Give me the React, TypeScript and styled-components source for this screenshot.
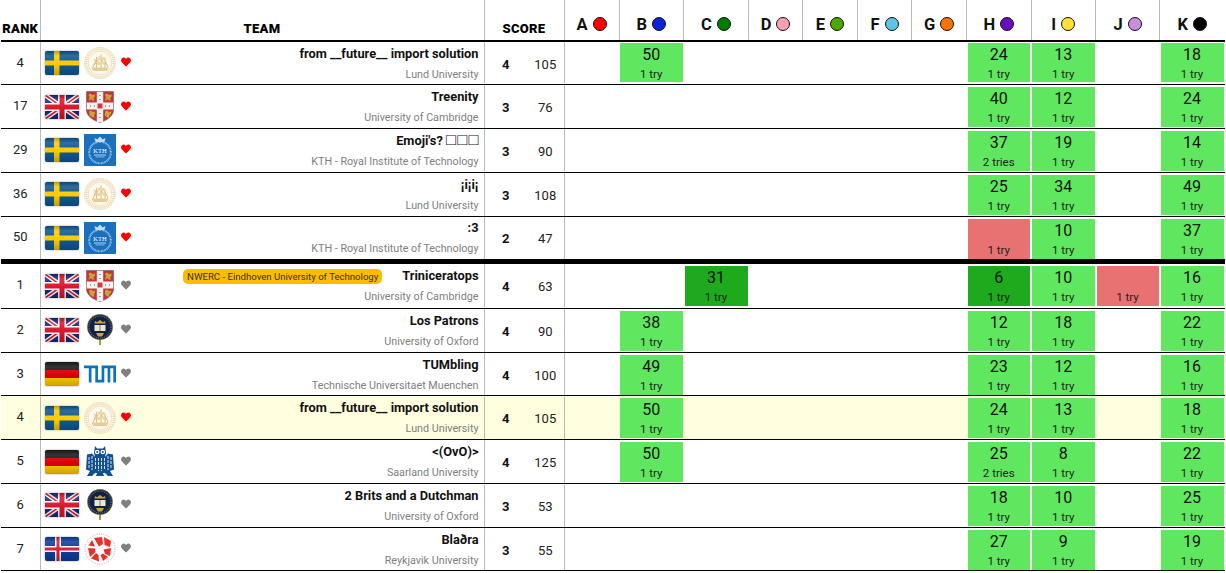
import * as React from 'react'
import styled, { createGlobalStyle } from 'styled-components'
import { FaHeart } from 'react-icons/fa'

const GREEN = '#60e760'
const FIRST = '#1daa1d'
const FAIL = '#e87272'

const problems = [
  { letter: 'A', color: '#ff0000', width: 55 },
  { letter: 'B', color: '#0a22d8', width: 64.5 },
  { letter: 'C', color: '#007c00', width: 65 },
  { letter: 'D', color: '#ff9fb4', width: 54 },
  { letter: 'E', color: '#4ea600', width: 55 },
  { letter: 'F', color: '#5fc4e8', width: 54 },
  { letter: 'G', color: '#ff7300', width: 55 },
  { letter: 'H', color: '#6a0dc0', width: 64.5 },
  { letter: 'I', color: '#ffe03a', width: 64.5 },
  { letter: 'J', color: '#c88ddc', width: 64 },
  { letter: 'K', color: '#000000', width: 65 },
]

type Country = 'se' | 'uk' | 'de' | 'is'
type School = 'lund' | 'cam' | 'kth' | 'ox' | 'tum' | 'saar' | 'ru'
type Solve = { time?: number; tries?: string; kind: 'ok' | 'first' | 'fail' }

interface TeamRow {
  rank: number
  country: Country
  school: School
  favorite: boolean
  name: string
  missingGlyphs?: string
  affiliation: string
  points: number
  time: number
  badge?: string
  solves: Record<string, Solve>
  highlight?: boolean
  separated?: boolean
}

const ok = (time: number, tries = '1 try'): Solve => ({ time, tries, kind: 'ok' })

const rows: TeamRow[] = [
  { rank: 4, country: 'se', school: 'lund', favorite: true, name: 'from __future__ import solution', affiliation: 'Lund University', points: 4, time: 105, solves: { B: ok(50), H: ok(24), I: ok(13), K: ok(18) } },
  { rank: 17, country: 'uk', school: 'cam', favorite: true, name: 'Treenity', affiliation: 'University of Cambridge', points: 3, time: 76, solves: { H: ok(40), I: ok(12), K: ok(24) } },
  { rank: 29, country: 'se', school: 'kth', favorite: true, name: "Emoji's? ", missingGlyphs: '□□□', affiliation: 'KTH - Royal Institute of Technology', points: 3, time: 90, solves: { H: ok(37, '2 tries'), I: ok(19), K: ok(14) } },
  { rank: 36, country: 'se', school: 'lund', favorite: true, name: '¡i¡i¡', affiliation: 'Lund University', points: 3, time: 108, solves: { H: ok(25), I: ok(34), K: ok(49) } },
  { rank: 50, country: 'se', school: 'kth', favorite: true, name: ':3', affiliation: 'KTH - Royal Institute of Technology', points: 2, time: 47, solves: { H: { tries: '1 try', kind: 'fail' }, I: ok(10), K: ok(37) } },
  { rank: 1, country: 'uk', school: 'cam', favorite: false, name: 'Triniceratops', affiliation: 'University of Cambridge', badge: 'NWERC - Eindhoven University of Technology', points: 4, time: 63, separated: true, solves: { C: { time: 31, tries: '1 try', kind: 'first' }, H: { time: 6, tries: '1 try', kind: 'first' }, I: ok(10), J: { tries: '1 try', kind: 'fail' }, K: ok(16) } },
  { rank: 2, country: 'uk', school: 'ox', favorite: false, name: 'Los Patrons', affiliation: 'University of Oxford', points: 4, time: 90, solves: { B: ok(38), H: ok(12), I: ok(18), K: ok(22) } },
  { rank: 3, country: 'de', school: 'tum', favorite: false, name: 'TUMbling', affiliation: 'Technische Universitaet Muenchen', points: 4, time: 100, solves: { B: ok(49), H: ok(23), I: ok(12), K: ok(16) } },
  { rank: 4, country: 'se', school: 'lund', favorite: true, highlight: true, name: 'from __future__ import solution', affiliation: 'Lund University', points: 4, time: 105, solves: { B: ok(50), H: ok(24), I: ok(13), K: ok(18) } },
  { rank: 5, country: 'de', school: 'saar', favorite: false, name: '<(OvO)>', affiliation: 'Saarland University', points: 4, time: 125, solves: { B: ok(50), H: ok(25, '2 tries'), I: ok(8), K: ok(22) } },
  { rank: 6, country: 'uk', school: 'ox', favorite: false, name: '2 Brits and a Dutchman', affiliation: 'University of Oxford', points: 3, time: 53, solves: { H: ok(18), I: ok(10), K: ok(25) } },
  { rank: 7, country: 'is', school: 'ru', favorite: false, name: 'Blaðra', affiliation: 'Reykjavik University', points: 3, time: 55, solves: { H: ok(27), I: ok(9), K: ok(19) } },
]

function FlagArt({ country }: { country: Country }) {
  if (country === 'se')
    return (
      <svg viewBox="0 0 34 24" width="34" height="24">
        <rect width="34" height="24" fill="#0f5a94" />
        <rect x="9" width="5.500" height="24" fill="#fecb00" />
        <rect y="9.500" width="34" height="5" fill="#fecb00" />
      </svg>
    )
  if (country === 'de')
    return (
      <svg viewBox="0 0 34 24" width="34" height="24">
        <rect width="34" height="8" fill="#1a1a1a" />
        <rect y="8" width="34" height="8" fill="#dd0000" />
        <rect y="16" width="34" height="8" fill="#ffce00" />
      </svg>
    )
  if (country === 'is')
    return (
      <svg viewBox="0 0 34 24" width="34" height="24">
        <rect width="34" height="24" fill="#0f3f9e" />
        <rect x="10" width="6" height="24" fill="#fff" />
        <rect y="9" width="34" height="6" fill="#fff" />
        <rect x="11.500" width="3" height="24" fill="#dc1e35" />
        <rect y="10.500" width="34" height="3" fill="#dc1e35" />
      </svg>
    )
  return (
    <svg viewBox="0 0 34 24" width="34" height="24">
      <rect width="34" height="24" fill="#1c2a78" />
      <path d="M0 0L34 24M34 0L0 24" stroke="#fff" strokeWidth="4.500" />
      <path d="M0 0L34 24M34 0L0 24" stroke="#d8182f" strokeWidth="1.500" />
      <rect x="13" width="8" height="24" fill="#fff" />
      <rect y="8" width="34" height="8" fill="#fff" />
      <rect x="14.500" width="5" height="24" fill="#d8182f" />
      <rect y="9.500" width="34" height="5" fill="#d8182f" />
    </svg>
  )
}

function SchoolArt({ school }: { school: School }) {
  switch (school) {
    case 'lund':
      return (
        <svg viewBox="0 0 32 32" width="32" height="32">
          <circle cx="16" cy="16" r="15.700" fill="#fdf9ef" stroke="#e6d2a3" strokeWidth=".6" />
          <circle cx="16" cy="16" r="13.800" fill="none" stroke="#e9d6ab" strokeWidth="2" strokeDasharray="1.100 1" />
          <circle cx="16" cy="16" r="11.800" fill="none" stroke="#e2c98e" strokeWidth=".5" />
          <path d="M7 20.500h18l-2.500 3.500h-13z" fill="#e6cd96" />
          <path d="M12.500 20.500V10M17 20.500V7.500M21 20.500V11M10 12l5 6M10 18l5-6M15 9.500l5 8M15 17.500l5-7M9 20l3-7M24 20l-3-6" stroke="#dfc283" strokeWidth="1.100" fill="none" />
          <path d="M13.500 10h7v3h-7zM13 14.500h8v2.500h-8z" fill="#ecd9ae" />
        </svg>
      )
    case 'cam':
      return (
        <svg viewBox="0 0 32 32" width="32" height="32">
          <path d="M2.500.5h27V19c0 6-6.500 10.500-13.500 12.500C9 29.500 2.500 25 2.500 19z" fill="#c4323f" stroke="#6a5a5a" strokeWidth=".6" />
          <path d="M12.800.8h6.400v30.400h-6.400zM2.800 11.500h26.400v7H2.800z" fill="#f4f2ee" />
          <rect x="13.500" y="12.500" width="5" height="5" fill="#cf3b45" />
          <path d="M4.500 3.500l2-1 2 1.500 2.500-.5v2l-1.500 2 1 2H8l-1-1.500-1.500 1.500h-1l1-3zM21 3.500l2-1 2 1.500 2.500-.5v2l-1.500 2 1 2h-2.500l-1-1.500-1.500 1.500h-1l1-3zM5 20.500l2-1 2 1.500 2-.5v2l-1 2 .5 2H8l-1-1.500-1 .5zM21 20.500l2-1 2 1.500 2.500-.5-.5 2-1.500 2-1 2.500-2.500-1.500-1-1z" fill="#c8a52e" />
          <path d="M15.500 4h1v1h-1zM15.500 8h1v1h-1zM15.500 22h1v1h-1zM15.500 26h1v1h-1zM6 14.500h1v1H6zM10 14.500h1v1h-1zM21 14.500h1v1h-1zM25 14.500h1v1h-1z" fill="#555" />
        </svg>
      )
    case 'kth':
      return (
        <svg viewBox="0 0 32 32" width="32" height="32">
          <rect width="32" height="32" fill="#1b70bd" />
          <circle cx="16" cy="18.500" r="10.800" fill="none" stroke="#9fc6e8" strokeWidth="2" strokeDasharray=".9 .6" />
          <path d="M11.500 8l-1-4 2.800 1.500L16 2.500l2.700 3L21.500 4l-1 4z" fill="#c4dbf0" />
          <text x="16" y="18.800" textAnchor="middle" fontSize="6.500" fill="#fff" fontFamily="Liberation Serif, serif">KTH</text>
          <rect x="10" y="20.500" width="12" height="1" fill="#b6d3ec" />
          <rect x="11.500" y="22.500" width="9" height=".8" fill="#9fc6e8" />
        </svg>
      )
    case 'ox':
      return (
        <svg viewBox="0 0 32 32" width="32" height="32">
          <path d="M16 24v7" stroke="#b8963a" strokeWidth="2" />
          <circle cx="16" cy="13" r="12.700" fill="#0f2247" stroke="#a08a4a" strokeWidth=".5" />
          <circle cx="16" cy="13" r="11" fill="none" stroke="#77704f" strokeWidth="1.200" strokeDasharray="1 1" />
          <rect x="10.500" y="11" width="11" height="6" fill="#ece6d4" />
          <rect x="15.500" y="11" width="1" height="6" fill="#8a7a50" />
          <path d="M10.500 9.500l.5-2.500 2 1.200L16 6l3 2.200 2-1.200.5 2.500z" fill="#c9a63c" />
          <path d="M12 19h8l-2 3.500h-4z" fill="#c9a63c" />
        </svg>
      )
    case 'tum':
      return (
        <svg viewBox="0 0 32 32" width="32" height="32">
          <path
            d="M0 7.500h14v17H11.300V10.200H7.500v14.300H4.800V10.200H0zM11.300 21.800h6.300V7.500H32v17h-2.700V10.200h-3v14.300h-2.700V10.200h-3.300v14.300h-9z"
            fill="#1072bd"
          />
        </svg>
      )
    case 'saar':
      return (
        <svg viewBox="0 0 32 32" width="32" height="32">
          <path d="M11 0l2 2.500h6L21 0l1 7-1 4 3-3.500 5 1 1 15-4 1.500 3 5h-5l-3-3h-2l1 3h-8l1-3h-2l-3 3H3l3-5-4-1.500 1-15 5-1 3 3.500-1-4z" fill="#14508e" />
          <circle cx="13.200" cy="6" r="2.300" fill="#fff" />
          <circle cx="18.800" cy="6" r="2.300" fill="#fff" />
          <circle cx="13.200" cy="6" r="1" fill="#14508e" />
          <circle cx="18.800" cy="6" r="1" fill="#14508e" />
          <path d="M5 11v12M8 10v14M11.500 12v12M14.500 12v13M17.500 12v13M20.500 12v12M24 10v14M27 11v12" stroke="#d4e3f0" strokeWidth="1" strokeDasharray="3 1" />
        </svg>
      )
    case 'ru':
      return (
        <svg viewBox="0 0 32 32" width="32" height="32">
          <circle cx="16" cy="16" r="15" fill="none" stroke="#c9a0a0" strokeWidth="1" strokeDasharray="1 1.300" />
          <path d="M10 5l8-1 1 7-4 2.500zM20 4l7 4-1 6-5.500-2zM27 15l-1 8-5-2-1.500-4.500zM24 24l-5 4-2.500-6 2.500-1.500zM15 28.500l-8-3 5-5.500 2.500 2zM6 24l-2-9 7 .5.500 3.500zM4.500 12.500L8 7l3 6.500z" fill="#ea2e28" />
        </svg>
      )
  }
}

export default function App() {
  return (
    <>
      <GlobalStyle />
      <Board>
        <colgroup>
          <col width={39} />
          <col width={444} />
          <col width={43} />
          <col width={37} />
          {problems.map((p) => (
            <col key={p.letter} style={{ width: p.width }} />
          ))}
        </colgroup>
        <thead>
          <tr>
            <LabelHead>RANK</LabelHead>
            <LabelHead>TEAM</LabelHead>
            <LabelHead colSpan={2}>SCORE</LabelHead>
            {problems.map((p) => (
              <ProblemHead key={p.letter}>
                <ProblemLabel>
                  {p.letter}
                  <Balloon $color={p.color} />
                </ProblemLabel>
              </ProblemHead>
            ))}
          </tr>
        </thead>
        <tbody>
          {rows.map((row, i) => (
            <Row key={i} $highlight={row.highlight} $separated={row.separated}>
              <RankCell>{row.rank}</RankCell>
              <TeamCell>
                <TeamLayout>
                  <FlagFrame>
                    <FlagArt country={row.country} />
                  </FlagFrame>
                  <SchoolLogo>
                    <SchoolArt school={row.school} />
                  </SchoolLogo>
                  <Favorite $on={row.favorite}>
                    <FaHeart size={10} />
                  </Favorite>
                  <TeamInfo>
                    <NameLine>
                      {row.badge && <GroupBadge>{row.badge}</GroupBadge>}
                      <TeamName>
                        {row.name}
                        {row.missingGlyphs && <MissingGlyphs>{row.missingGlyphs}</MissingGlyphs>}
                      </TeamName>
                    </NameLine>
                    <Affiliation>{row.affiliation}</Affiliation>
                  </TeamInfo>
                </TeamLayout>
              </TeamCell>
              <PointsCell>{row.points}</PointsCell>
              <TimeCell>{row.time}</TimeCell>
              {problems.map((p) => {
                const solve = row.solves[p.letter]
                return (
                  <ProblemCell key={p.letter}>
                    {solve && (
                      <ScoreBox $kind={solve.kind}>
                        <ScoreTime>{solve.time}</ScoreTime>
                        <ScoreTries>{solve.tries}</ScoreTries>
                      </ScoreBox>
                    )}
                  </ProblemCell>
                )
              })}
            </Row>
          ))}
        </tbody>
      </Board>
    </>
  )
}

const GlobalStyle = createGlobalStyle`
  body {
    margin: 0;
    background: #fff;
    color: #111;
    font-family: Roboto, "Liberation Sans", "DejaVu Sans", sans-serif;
  }
`

const Board = styled.table`
  margin-left: 1px;
  width: 1223px;
  table-layout: fixed;
  border-collapse: collapse;
  font-size: 13px;
`

const LabelHead = styled.th`
  box-sizing: border-box;
  height: 41px;
  padding: 0 0 3px;
  border-right: 1px solid #bbb;
  border-bottom: 2px solid #000;
  vertical-align: bottom;
  font-size: 13px;
  font-weight: 900;
  letter-spacing: 0.3px;
  line-height: 16px;
  color: #000;
`

const ProblemHead = styled.th`
  box-sizing: border-box;
  padding: 0 0 6px;
  border-right: 1px solid #bbb;
  border-bottom: 2px solid #000;
  vertical-align: bottom;
  &:last-child {
    border-right: none;
  }
`

const ProblemLabel = styled.span`
  display: inline-flex;
  align-items: center;
  gap: 5px;
  font-size: 16.5px;
  font-weight: 700;
  line-height: 18px;
  color: #111;
`

const Balloon = styled.span<{ $color: string }>`
  display: block;
  width: 12px;
  height: 12px;
  margin-top: -2px;
  border: 1px solid #111;
  border-radius: 50%;
  background: ${(p) => p.$color};
`

const Row = styled.tr<{ $highlight?: boolean; $separated?: boolean }>`
  background: ${(p) => (p.$highlight ? '#ffffe0' : 'transparent')};
  & > td {
    box-sizing: border-box;
    height: ${(p) => (p.$separated ? '47.4px' : '43.75px')};
    border-bottom: 1px solid #000;
    border-top: ${(p) => (p.$separated ? '5px solid #000' : 'none')};
  }
`

const RankCell = styled.td`
  padding: 0 0 2px;
  border-right: 1px solid #bbb;
  text-align: center;
  color: #222;
`

const TeamCell = styled.td`
  padding: 0 5px 0 4px;
  border-right: 1px solid #bbb;
`

const TeamLayout = styled.div`
  display: flex;
  align-items: center;
`

const FlagFrame = styled.div`
  position: relative;
  flex: none;
  width: 34px;
  height: 24px;
  margin-right: 5px;
  overflow: hidden;
  border-radius: 2px;
  box-shadow: 0 0 2px rgba(0, 0, 0, 0.45);
  svg {
    display: block;
  }
  &::after {
    content: '';
    position: absolute;
    inset: 0;
    background: linear-gradient(
      rgba(0, 0, 0, 0.22),
      rgba(255, 255, 255, 0.12) 20%,
      rgba(255, 255, 255, 0) 55%,
      rgba(0, 0, 0, 0.22)
    );
  }
`

const SchoolLogo = styled.div`
  flex: none;
  width: 32px;
  height: 32px;
  svg {
    display: block;
  }
`

const Favorite = styled.div<{ $on: boolean }>`
  flex: none;
  display: flex;
  width: 10px;
  margin: -2px 0 0 5px;
  color: ${(p) => (p.$on ? '#ff0000' : '#808080')};
`

const TeamInfo = styled.div`
  flex: 1;
  display: flex;
  flex-direction: column;
  align-items: flex-end;
  gap: 4px;
  margin-top: 1px;
`

const NameLine = styled.div`
  display: flex;
  align-items: center;
  justify-content: flex-end;
`

const TeamName = styled.span`
  font-size: 12.8px;
  font-weight: 700;
  line-height: 18px;
  white-space: pre;
  color: #111;
`

const MissingGlyphs = styled.span`
  margin-right: -1.3px;
  font-size: 16.5px;
  font-weight: 400;
  letter-spacing: 1.3px;
  line-height: 1;
`

const GroupBadge = styled.span`
  margin-right: 20px;
  padding: 0 4px;
  border-radius: 5px;
  background: #ffbb00;
  font-size: 9.6px;
  line-height: 15px;
  color: #333;
`

const Affiliation = styled.span`
  font-size: 10.75px;
  line-height: 16px;
  color: #808080;
`

const PointsCell = styled.td`
  padding: 2px 0 0;
  text-align: center;
  font-weight: 700;
`

const TimeCell = styled.td`
  padding: 2px 0 0;
  border-right: 1px solid #bbb;
  text-align: center;
  color: #222;
`

const ProblemCell = styled.td`
  padding: 0 1px;
  vertical-align: top;
`

const kindColors = { ok: GREEN, first: FIRST, fail: FAIL }

const ScoreBox = styled.div<{ $kind: Solve['kind'] }>`
  height: 40px;
  margin-top: 2px;
  background: ${(p) => kindColors[p.$kind]};
  text-align: center;
  tr:first-child & {
    height: 39px;
    margin-top: 1px;
  }
`

const ScoreTime = styled.div`
  height: 22px;
  font-size: 16px;
  line-height: 24px;
  color: #111;
`

const ScoreTries = styled.div`
  font-size: 11.5px;
  line-height: 18px;
  color: #222;
`
